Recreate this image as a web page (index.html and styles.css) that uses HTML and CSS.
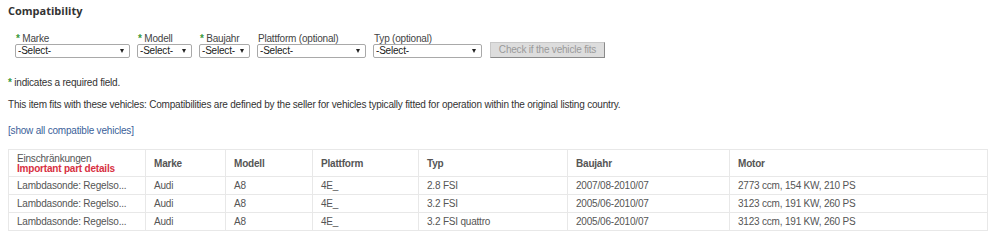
FILE: index.html
```html
<!DOCTYPE html>
<html lang="de">
<head>
  <meta charset="UTF-8">
  <title>Compatibility</title>
  <link rel="stylesheet" href="styles.css">
</head>
<body>
  <h2 class="title">Compatibility</h2>

  <form class="finder">
    <div class="field">
      <label><span class="req">*</span> Marke</label>
      <span class="select w-marke"><select><option>-Select-</option></select></span>
    </div>
    <div class="field">
      <label><span class="req">*</span> Modell</label>
      <span class="select w-modell"><select><option>-Select-</option></select></span>
    </div>
    <div class="field">
      <label><span class="req">*</span> Baujahr</label>
      <span class="select w-baujahr"><select><option>-Select-</option></select></span>
    </div>
    <div class="field">
      <label>Plattform (optional)</label>
      <span class="select w-wide"><select><option>-Select-</option></select></span>
    </div>
    <div class="field">
      <label>Typ (optional)</label>
      <span class="select w-wide"><select><option>-Select-</option></select></span>
    </div>
    <button type="button" class="check" disabled>Check if the vehicle fits</button>
  </form>

  <p class="note required"><span class="req">*</span> indicates a required field.</p>

  <p class="note fits">This item fits with these vehicles: Compatibilities are defined by the seller for vehicles typically fitted for operation within the original listing country.</p>

  <p class="note show-all"><a href="#">[show all compatible vehicles]</a></p>

  <table class="vehicles">
    <colgroup>
      <col style="width: 137px">
      <col style="width: 80px">
      <col style="width: 87px">
      <col style="width: 106px">
      <col style="width: 149px">
      <col style="width: 162px">
      <col>
    </colgroup>
    <thead>
      <tr>
        <th class="restr">Einschränkungen<br><span class="important">Important part details</span></th>
        <th>Marke</th>
        <th>Modell</th>
        <th>Plattform</th>
        <th>Typ</th>
        <th>Baujahr</th>
        <th>Motor</th>
      </tr>
    </thead>
    <tbody>
      <tr>
        <td>Lambdasonde: Regelso...</td>
        <td>Audi</td>
        <td>A8</td>
        <td>4E_</td>
        <td>2.8 FSI</td>
        <td>2007/08-2010/07</td>
        <td>2773 ccm, 154 KW, 210 PS</td>
      </tr>
      <tr>
        <td>Lambdasonde: Regelso...</td>
        <td>Audi</td>
        <td>A8</td>
        <td>4E_</td>
        <td>3.2 FSI</td>
        <td>2005/06-2010/07</td>
        <td>3123 ccm, 191 KW, 260 PS</td>
      </tr>
      <tr>
        <td>Lambdasonde: Regelso...</td>
        <td>Audi</td>
        <td>A8</td>
        <td>4E_</td>
        <td>3.2 FSI quattro</td>
        <td>2005/06-2010/07</td>
        <td>3123 ccm, 191 KW, 260 PS</td>
      </tr>
    </tbody>
  </table>
</body>
</html>
```

FILE: styles.css
```css
body {
  margin: 0;
  padding: 0 8px;
  background: #fff;
  color: #333;
  font-family: "Liberation Sans", Arial, sans-serif;
  font-size: 10px;
  letter-spacing: -0.2px;
}
.title {
  font-family: "Open Sans", "Liberation Sans", sans-serif;
  font-size: 11px;
  font-weight: 700;
  letter-spacing: 0;
  color: #333;
  margin: 0;
  padding-top: 3px;
  line-height: 16px;
}
.finder {
  display: flex;
  align-items: flex-end;
  gap: 7px;
  margin: 15px 0 0 7px;
}
.field {
  display: flex;
  flex-direction: column;
}
.field label {
  line-height: 10px;
  color: #444;
  padding-left: 1px;
}
.req {
  color: #3a9a3a;
  font-weight: bold;
}
.select {
  position: relative;
  display: block;
  height: 14px;
}
.select select {
  appearance: none;
  -webkit-appearance: none;
  width: 100%;
  height: 14px;
  margin: 0;
  padding: 0 0 0 2px;
  border: 1px solid #a9a9a9;
  border-radius: 2px;
  background: #fff;
  font-family: "Liberation Sans", Arial, sans-serif;
  font-size: 10px;
  letter-spacing: -0.2px;
  line-height: 12px;
  color: #222;
}
.select::after {
  content: "";
  position: absolute;
  right: 6px;
  top: 5px;
  border-left: 2.5px solid transparent;
  border-right: 2.5px solid transparent;
  border-top: 4px solid #222;
  pointer-events: none;
}
.w-marke { width: 115px; }
.w-modell { width: 55px; }
.w-baujahr { width: 51px; }
.w-wide { width: 109px; }
.check {
  width: 115px;
  height: 16px;
  margin: 0 0 0 1px;
  padding: 0;
  border: 1px solid #c8c8c8;
  border-right-color: #8a8a8a;
  border-bottom-color: #8a8a8a;
  background: #dddddd;
  color: #9a9a9a;
  font-family: "Liberation Sans", Arial, sans-serif;
  font-size: 10px;
  letter-spacing: -0.2px;
  line-height: 14px;
}
.note {
  margin: 0;
  line-height: 13px;
}
.note.required {
  margin-top: 18px;
}
.note.fits {
  margin-top: 9px;
}
.note.show-all {
  margin-top: 13px;
}
.note a {
  color: #3b5f9a;
  text-decoration: none;
}
.vehicles {
  margin-top: 12px;
  width: 980px;
  border-collapse: collapse;
  table-layout: fixed;
  color: #555;
  border: 1px solid #e4e4e4;
}
.vehicles th,
.vehicles td {
  border: 1px solid #e8e8e8;
  text-align: left;
  padding: 0 8px;
  white-space: nowrap;
  overflow: hidden;
}
.vehicles th {
  height: 25px;
  font-weight: bold;
  color: #555;
  vertical-align: middle;
}
.vehicles th.restr {
  font-weight: normal;
  line-height: 10px;
  padding-top: 1px;
}
.important {
  color: #d8303f;
  font-weight: bold;
}
.vehicles td {
  height: 17px;
  line-height: 17px;
}
```
